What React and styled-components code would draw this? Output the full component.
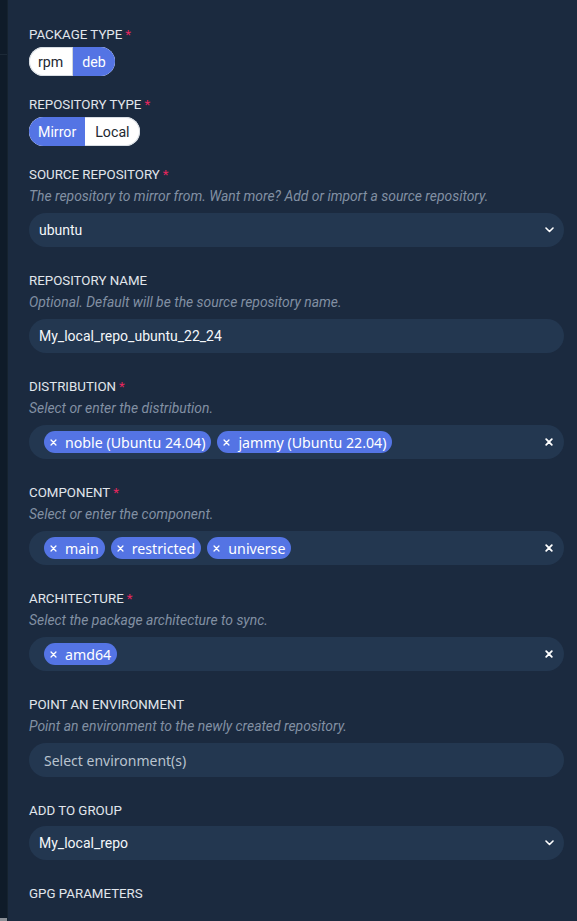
import React from "react";
import styled, { createGlobalStyle } from "styled-components";

const Global = createGlobalStyle`
  html, body { margin: 0; padding: 0; background: #1b2a3f; }
  body { font-family: Roboto, "Liberation Sans", sans-serif; }
  * { box-sizing: border-box; }
`;

const Page = styled.div`
  display: flex;
  width: 577px;
  height: 921px;
  overflow: hidden;
  background: #1b2a3f;
`;

const Rail = styled.div`
  width: 8px;
  flex: none;
  background: #0f1b29;
  border-right: 1px solid #15222f;
  display: flex;
  flex-direction: column;
`;

const RailTop = styled.div`
  height: 55px;
  border-bottom: 1px solid #1c2937;
`;

const RailFill = styled.div`
  flex: 1;
`;

const RailFoot = styled.div`
  height: 3px;
  background: #8a8f96;
`;

const Panel = styled.div`
  flex: 1;
  padding: 27px 13px 0 21px;
  display: flex;
  flex-direction: column;
`;

const Field = styled.div`
  display: flex;
  flex-direction: column;
  margin-bottom: ${(p) => (p.$tight ? "21px" : "26px")};
`;

const Label = styled.div`
  font-size: 13.3px;
  line-height: 16px;
  color: #e1e6ec;
  text-transform: uppercase;
`;

const Req = styled.span`
  color: #e8265e;
  margin-left: 3px;
`;

const Hint = styled.div`
  margin-top: 4px;
  font-size: 13.9px;
  line-height: 18px;
  font-style: italic;
  color: #8290a3;
`;

const Toggle = styled.div`
  margin-top: 4px;
  display: inline-flex;
  align-self: flex-start;
  height: 29px;
  border-radius: 15px;
  overflow: hidden;
  background: #fff;
  box-shadow: inset 0 0 0 1px #d8dde3;
`;

const ToggleBtn = styled.div`
  display: flex;
  align-items: center;
  padding: 0 ${(p) => p.$pad || 9}px;
  font-size: 14.2px;
  color: ${(p) => (p.$on ? "#ffffff" : "#222831")};
  background: ${(p) => (p.$on ? "#5474e4" : "transparent")};
  border-right: ${(p) => (p.$div ? "1px solid #cfd5dc" : "none")};
`;

const Control = styled.div`
  margin-top: ${(p) => (p.$afterHint ? "8px" : "7px")};
  height: 34px;
  border-radius: 17px;
  background: #233750;
  display: flex;
  align-items: center;
  padding: 0 ${(p) => p.$right}px 0 ${(p) => p.$left}px;
  font-size: 14px;
  color: ${(p) => (p.$placeholder ? "#b9c3ce" : "#f3f6f9")};
  font-family: ${(p) =>
    p.$placeholder ? '"Noto Sans", Roboto, sans-serif' : "Roboto, sans-serif"};
`;

const Value = styled.div`
  flex: 1;
`;

const Chips = styled.div`
  flex: 1;
  display: flex;
  gap: 6px;
`;

const Chip = styled.div`
  height: 22px;
  border-radius: 11px;
  background: #5474e4;
  color: #fff;
  display: flex;
  align-items: center;
  padding: 0 6px 0 6px;
  gap: 8px;
  font-size: 14.2px;
  font-family: "Noto Sans", Roboto, sans-serif;
  white-space: nowrap;
`;

const Chevron = () => (
  <svg width="9" height="6" viewBox="0 0 9 6" fill="none">
    <path d="M1 1l3.5 3.5L8 1" stroke="#fff" strokeWidth="1.6" strokeLinecap="round" strokeLinejoin="round" />
  </svg>
);

const Cross = ({ size = 8, w = 1.8 }) => (
  <svg width={size} height={size} viewBox="0 0 8 8" fill="none">
    <path d="M1.2 1.2l5.6 5.6M6.8 1.2L1.2 6.8" stroke="#fff" strokeWidth={w} strokeLinecap="round" />
  </svg>
);

const MultiSelect = ({ items }) => (
  <Control $afterHint $left={15} $right={11}>
    <Chips>
      {items.map((t) => (
        <Chip key={t}>
          <Cross size={7} w={1.5} />
          {t}
        </Chip>
      ))}
    </Chips>
    <Cross size={8} w={1.8} />
  </Control>
);

export default function App() {
  return (
    <>
      <Global />
      <Page>
        <Rail>
          <RailTop />
          <RailFill />
          <RailFoot />
        </Rail>
        <Panel>
          <Field $tight>
            <Label>
              Package type<Req>*</Req>
            </Label>
            <Toggle>
              <ToggleBtn $div>rpm</ToggleBtn>
              <ToggleBtn $on>deb</ToggleBtn>
            </Toggle>
          </Field>

          <Field $tight>
            <Label>
              Repository type<Req>*</Req>
            </Label>
            <Toggle>
              <ToggleBtn $on>Mirror</ToggleBtn>
              <ToggleBtn $pad={10}>Local</ToggleBtn>
            </Toggle>
          </Field>

          <Field>
            <Label>
              Source repository<Req>*</Req>
            </Label>
            <Hint>The repository to mirror from. Want more? Add or import a source repository.</Hint>
            <Control $afterHint $left={10} $right={10}>
              <Value>ubuntu</Value>
              <Chevron />
            </Control>
          </Field>

          <Field>
            <Label>Repository name</Label>
            <Hint>Optional. Default will be the source repository name.</Hint>
            <Control $afterHint $left={10} $right={10}>
              <Value>My_local_repo_ubuntu_22_24</Value>
            </Control>
          </Field>

          <Field>
            <Label>
              Distribution<Req>*</Req>
            </Label>
            <Hint>Select or enter the distribution.</Hint>
            <MultiSelect items={["noble (Ubuntu 24.04)", "jammy (Ubuntu 22.04)"]} />
          </Field>

          <Field>
            <Label>
              Component<Req>*</Req>
            </Label>
            <Hint>Select or enter the component.</Hint>
            <MultiSelect items={["main", "restricted", "universe"]} />
          </Field>

          <Field>
            <Label>
              Architecture<Req>*</Req>
            </Label>
            <Hint>Select the package architecture to sync.</Hint>
            <MultiSelect items={["amd64"]} />
          </Field>

          <Field>
            <Label>Point an environment</Label>
            <Hint>Point an environment to the newly created repository.</Hint>
            <Control $afterHint $placeholder $left={15} $right={10}>
              <Value>Select environment(s)</Value>
            </Control>
          </Field>

          <Field>
            <Label>Add to group</Label>
            <Control $left={10} $right={10}>
              <Value>My_local_repo</Value>
              <Chevron />
            </Control>
          </Field>

          <Field>
            <Label>GPG parameters</Label>
          </Field>
        </Panel>
      </Page>
    </>
  );
}
